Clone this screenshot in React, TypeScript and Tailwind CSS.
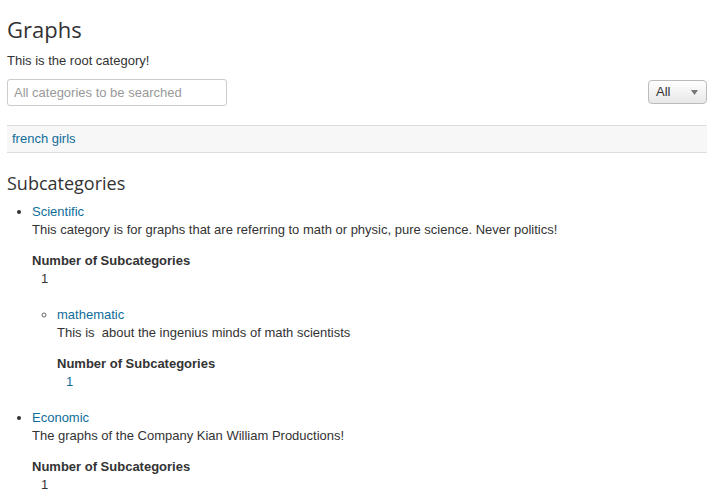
import React from "react";

type Category = {
  name: string;
  description: string;
  count: number;
  countIsLink?: boolean;
  children?: Category[];
};

const subcategories: Category[] = [
  {
    name: "Scientific",
    description:
      "This category is for graphs that are referring to math or physic, pure science. Never politics!",
    count: 1,
    children: [
      {
        name: "mathematic",
        description: "This is  about the ingenius minds of math scientists",
        count: 1,
        countIsLink: true,
      },
    ],
  },
  {
    name: "Economic",
    description: "The graphs of the Company Kian William Productions!",
    count: 1,
  },
];

function CategoryItem({ cat, nested }: { cat: Category; nested?: boolean }) {
  return (
    <li
      className={
        nested ? "list-[circle] marker:text-[#666]" : "list-disc marker:text-[#333]"
      }
    >
      <a href="#" className="text-[#106d9a]">
        {cat.name}
      </a>
      <div className="whitespace-pre">{cat.description}</div>
      <dl className="mt-[13px]">
        <dt className="font-bold">Number of Subcategories</dt>
        <dd className={"ml-[9px] " + (cat.countIsLink ? "text-[#106d9a]" : "")}>
          {cat.count}
        </dd>
      </dl>
      {cat.children && (
        <ul className="pl-[25px] mt-[18px]">
          {cat.children.map((c) => (
            <CategoryItem key={c.name} cat={c} nested />
          ))}
        </ul>
      )}
    </li>
  );
}

export default function App() {
  return (
    <div
      className="px-[7px] pr-[9px] text-[13px] leading-[18px] text-[#333] bg-white min-h-[504px]"
      style={{ fontFamily: '"Liberation Sans", Arial, sans-serif' }}
    >
      <h1
        className="mt-[14px] text-[22px] leading-[30px] text-[#333]"
        style={{ fontFamily: '"Open Sans", sans-serif' }}
      >
        Graphs
      </h1>
      <p className="mt-[8px]">This is the root category!</p>

      <div className="mt-[9px] flex justify-between items-start">
        <input
          type="text"
          placeholder="All categories to be searched"
          className="w-[220px] h-[27px] border border-[#ccc] rounded-[3px] px-[6px] text-[13px] placeholder:text-[#999] outline-none"
        />
        <button className="mt-px w-[59px] h-[24px] flex items-center justify-between pl-[7px] pr-[8px] border border-[#bbb] rounded-[4px] bg-gradient-to-b from-white to-[#e8e8e8] text-[#333] text-[13px]">
          <span>All</span>
          <svg width="7" height="5" viewBox="0 0 7 5">
            <path d="M0 0h7L3.5 5z" fill="#777" />
          </svg>
        </button>
      </div>

      <div className="mt-[19px] h-[28px] flex items-center px-[5px] bg-[#f7f7f7] border-y border-[#ddd]">
        <a href="#" className="text-[#106d9a]">
          french girls
        </a>
      </div>

      <h2
        className="mt-[18px] text-[18px] leading-[24px] text-[#333]"
        style={{ fontFamily: '"Open Sans", sans-serif' }}
      >
        Subcategories
      </h2>

      <ul className="pl-[25px] mt-[8px] flex flex-col gap-[18px]">
        {subcategories.map((c) => (
          <CategoryItem key={c.name} cat={c} />
        ))}
      </ul>
    </div>
  );
}
